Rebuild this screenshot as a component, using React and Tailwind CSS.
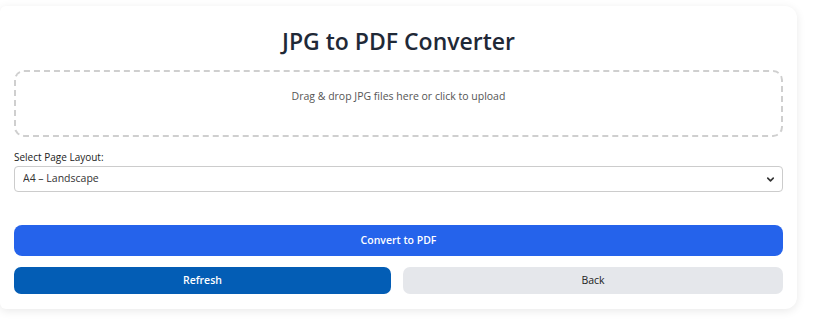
import { ChevronDown } from "lucide-react"

const App = () => {
  return (
    <div
      className="min-h-[320px] w-[824px] bg-white pt-[6px]"
      style={{ fontFamily: '"Open Sans", "Noto Sans", sans-serif' }}
    >
      <div className="w-[797px] rounded-r-xl rounded-l-md bg-white px-[14px] pt-[19px] pb-[15px] shadow-[0_2px_10px_rgba(0,0,0,0.09)]">
        <h1 className="mb-[13px] h-8 text-center text-[23px] font-semibold leading-8 text-[#1f2937]">
          JPG to PDF Converter
        </h1>

        <div className="flex h-[67px] cursor-pointer items-center justify-center rounded-[10px] border-2 border-dashed border-[#cfcfcf] pb-[14px] text-[10.5px] text-[#555]">
          Drag &amp; drop JPG files here or click to upload
        </div>

        <label className="mt-[13px] block h-[14px] text-[10px] leading-[14px] text-[#222]">
          Select Page Layout:
        </label>

        <div className="relative mt-[2px]">
          <select
            defaultValue="a4-landscape"
            className="block h-[26px] w-full appearance-none rounded-[4px] border border-[#ccc] bg-white px-[8px] text-[10.5px] text-[#333] outline-none"
            style={{ fontFamily: '"Open Sans", "Noto Sans", sans-serif' }}
          >
            <option value="a4-portrait">A4 – Portrait</option>
            <option value="a4-landscape">A4 – Landscape</option>
          </select>
          <ChevronDown
            className="pointer-events-none absolute right-[7px] top-[8px] h-[11px] w-[11px] text-[#333]"
            strokeWidth={3.5}
          />
        </div>

        <button
          type="button"
          className="mt-[33px] block h-[31px] w-full rounded-[8px] bg-[#2563eb] text-[10.5px] font-semibold text-white"
        >
          Convert to PDF
        </button>

        <div className="mt-[11px] grid grid-cols-[377px_1fr] gap-3">
          <button
            type="button"
            className="h-[27px] rounded-[7px] bg-[#035db5] text-[10.5px] font-semibold text-white"
          >
            Refresh
          </button>
          <button
            type="button"
            className="h-[27px] rounded-[7px] bg-[#e5e7eb] text-[10.5px] text-[#222]"
          >
            Back
          </button>
        </div>
      </div>
    </div>
  )
}

export default App
